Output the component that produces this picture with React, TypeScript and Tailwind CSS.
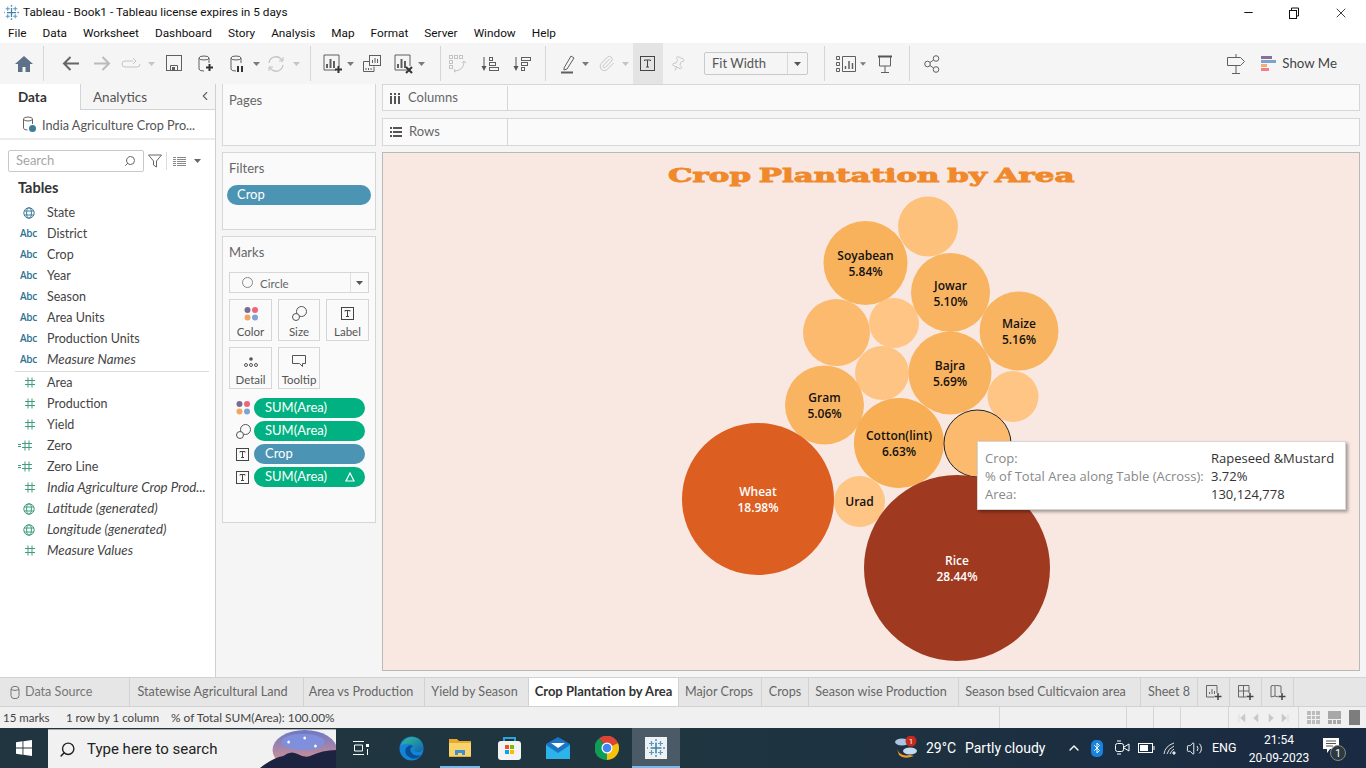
import React from "react";
import { Search, ChevronLeft, ChevronUp, Minus, X, Volume2, Bluetooth, Paperclip, Pin } from "lucide-react";

const G = "#5f5f5f";
const L = "#c4c4c4";

const Caret = ({ c = "#7a7a7a" }: { c?: string }) => (
  <svg width="7" height="4" viewBox="0 0 7 4"><path d="M0 0h7L3.500 4z" fill={c} /></svg>
);

const Sep = () => <div className="w-px h-[35px] bg-[#d6d6d6]" />;

const Slot = ({ w, children, className = "" }: { w: string; children?: React.ReactNode; className?: string }) => (
  <div className={`${w} h-full flex items-center justify-center shrink-0 ${className}`}>{children}</div>
);

const Ico = ({ w = 20, h = 20, children }: { w?: number; h?: number; children: React.ReactNode }) => (
  <svg width={w} height={h} viewBox={`0 0 ${w} ${h}`} fill="none" stroke={G} strokeWidth="1">{children}</svg>
);

const Plus = ({ x, y }: { x: number; y: number }) => (
  <path d={`M${x + 3.5} ${y}v7M${x} ${y + 3.5}h7`} stroke="#333" strokeWidth="2" />
);

const Cyl = ({ c = G }: { c?: string }) => (
  <>
    <ellipse cx="8" cy="4" rx="5" ry="2" stroke={c} />
    <path d="M3 4v11q0 2 5 2M13 4v5" stroke={c} />
  </>
);

const BarsBox = ({ cross, plus }: { cross?: boolean; plus?: boolean }) => (
  <Ico w={22} h={22}>
    <path d="M14 17H2V2h15v11" />
    <path d="M5 15v-4M8.500 15V6M12 15V8" strokeWidth="2" />
    {plus && <Plus x={13} y={13} />}
    {cross && <path d="M13 14l6 6M19 14l-6 6" stroke="#333" strokeWidth="2" />}
  </Ico>
);

const SortIcon = ({ desc }: { desc?: boolean }) => (
  <Ico w={18} h={18}>
    <path d="M3 2v12" stroke="#555" />
    <path d="M0.500 11h5L3 16z" fill="#555" stroke="none" />
    {desc ? (
      <>
        <rect x="8.500" y="2.500" width="9" height="3" />
        <rect x="8.500" y="7.500" width="6" height="3" />
        <rect x="8.500" y="12.500" width="3" height="3" />
      </>
    ) : (
      <>
        <rect x="8.500" y="2.500" width="3" height="3" />
        <rect x="8.500" y="7.500" width="6" height="3" />
        <rect x="8.500" y="12.500" width="9" height="3" />
      </>
    )}
  </Ico>
);

const Arrow = ({ c, flip }: { c: string; flip?: boolean }) => (
  <svg width="17" height="15" viewBox="0 0 17 15" fill="none" stroke={c} strokeWidth="2" className={flip ? "-scale-x-100" : ""}>
    <path d="M2 7.500h15M8.500 1L2 7.500 8.500 14" />
  </svg>
);

const Toolbar = () => (
  <div className="h-[41px] bg-[#f5f5f5] flex items-center shrink-0 pl-[9px]">
    <Slot w="w-[30px]">
      <svg width="18" height="16" viewBox="0 0 18 16"><path d="M9 0L0 8h3v8h4.500v-5h3v5H15V8h3z" fill="#5d7288" /></svg>
    </Slot>
    <Slot w="w-[8px]"><Sep /></Slot>
    <Slot w="w-[29px]" className="ml-[9px]"><Arrow c="#666" /></Slot>
    <Slot w="w-[35px]"><Arrow c="#bbb" flip /></Slot>
    <Slot w="w-[21px]">
      <Ico w={20} h={12}>
        <path d="M12 3H4q-3 0-3 3t3 3h12q3 0 3-3" stroke={L} />
        <path d="M12 0l3 3-3 3" stroke={L} />
      </Ico>
    </Slot>
    <Slot w="w-[14px]" className="ml-[3px]"><Caret c="#c4c4c4" /></Slot>
    <Slot w="w-[30px]" className="ml-[1px]">
      <Ico w={17} h={17}>
        <rect x="0.500" y="0.500" width="15" height="15" />
        <path d="M4.500 15.500v-5h7v5" />
        <rect x="6" y="12" width="3" height="3" fill={G} stroke="none" />
      </Ico>
    </Slot>
    <Slot w="w-[33px]"><Ico w={20} h={20}><Cyl /><Plus x={10} y={10} /></Ico></Slot>
    <Slot w="w-[29px]">
      <Ico w={18} h={20}><Cyl /><path d="M10 12v6M14 12v6" stroke="#333" strokeWidth="2" /></Ico>
    </Slot>
    <Slot w="w-[11px]"><Caret /></Slot>
    <Slot w="w-[28px]">
      <Ico w={18} h={18}>
        <path d="M2 8a7 7 0 0 1 12-4l2 2M16 10a7 7 0 0 1-12 4l-2-2" stroke={L} strokeWidth="1.300" />
        <path d="M16 2v4h-4M2 16v-4h4" stroke={L} />
      </Ico>
    </Slot>
    <Slot w="w-[12px]"><Caret c="#c4c4c4" /></Slot>
    <Slot w="w-[8px]" className="ml-[4px]"><Sep /></Slot>
    <Slot w="w-[27px]" className="ml-[5px]"><BarsBox plus /></Slot>
    <Slot w="w-[8px]"><Caret /></Slot>
    <Slot w="w-[32px]" className="ml-[2px]">
      <Ico w={18} h={18}>
        <rect x="6.500" y="0.500" width="11" height="10" fill="#f5f5f5" />
        <path d="M9.500 8V5M12 8V3M14.500 8V4" />
        <path d="M6 6.500H0.500v10H11v-5" />
        <path d="M3 15v-2M5.500 15v-2M8 15v-2" />
      </Ico>
    </Slot>
    <Slot w="w-[26px]" className="ml-[3px]"><BarsBox cross /></Slot>
    <Slot w="w-[8px]"><Caret /></Slot>
    <Slot w="w-[8px]" className="ml-[11px]"><Sep /></Slot>
    <Slot w="w-[26px]" className="ml-[1px]">
      <Ico w={18} h={18}>
        <g stroke={L}>
          <rect x="0.500" y="0.500" width="3" height="3" /><rect x="5.500" y="0.500" width="3" height="3" /><rect x="10.500" y="0.500" width="3" height="3" />
          <rect x="0.500" y="5.500" width="3" height="3" /><rect x="0.500" y="10.500" width="3" height="3" />
          <path d="M15 7q0 8-9 9M6 14l-1 2 2 1M13 8l2-2 2 2" />
        </g>
      </Ico>
    </Slot>
    <Slot w="w-[33px]" className="ml-[2px]"><SortIcon /></Slot>
    <Slot w="w-[31px]"><SortIcon desc /></Slot>
    <Slot w="w-[8px]" className="ml-[4px]"><Sep /></Slot>
    <Slot w="w-[22px]" className="ml-[9px]">
      <Ico w={16} h={20}>
        <path d="M3 14L10 2l3 2-7 11-3 1z" />
        <path d="M0 18.500h12" strokeWidth="2" />
      </Ico>
    </Slot>
    <Slot w="w-[10px]"><Caret /></Slot>
    <Slot w="w-[30px]" className="ml-[1px]"><Paperclip size={17} stroke={L} strokeWidth={1.4} /></Slot>
    <Slot w="w-[8px]"><Caret c="#c4c4c4" /></Slot>
    <Slot w="w-[30px]" className="ml-[4px] h-[30px] bg-[#e4e4e4]">
      <Ico w={16} h={16}>
        <rect x="0.500" y="0.500" width="14" height="14" stroke="#444" />
        <path d="M4.500 5V4h6v1M7.500 4v7M6 11h3" stroke="#444" />
      </Ico>
    </Slot>
    <Slot w="w-[29px]"><Pin size={16} stroke={L} strokeWidth={1.3} className="rotate-[25deg]" /></Slot>
    <div className="ml-[12px] w-[104px] h-[23px] border border-[#c9c9c9] rounded-[2px] flex items-center text-[13px] text-[#555] shrink-0 bg-[#f5f5f5]">
      <span className="flex-1 pl-[7px]">Fit Width</span>
      <span className="w-[20px] h-full border-l border-[#d8d8d8] flex items-center justify-center"><Caret c="#555" /></span>
    </div>
    <Slot w="w-[8px]" className="ml-[12px]"><Sep /></Slot>
    <Slot w="w-[20px]" className="ml-[8px]">
      <Ico w={20} h={18}>
        <path d="M0.500 1.500h3v3h-3zM0.500 7.500h3v3h-3zM0.500 13.500h3v3h-3zM6.500 1.500h13v15h-13z" />
        <path d="M9.500 14v-3M13 14V6M16.500 14V8" strokeWidth="1.500" />
      </Ico>
    </Slot>
    <Slot w="w-[6px]" className="ml-[4px]"><Caret /></Slot>
    <Slot w="w-[34px]" className="ml-[2px]">
      <Ico w={16} h={20}>
        <path d="M1 2.500h14" strokeWidth="2" stroke="#555" />
        <path d="M2.500 3v9h11V3M8 12v6M4 18.500h8" />
      </Ico>
    </Slot>
    <Slot w="w-[8px]" className="ml-[3px]"><Sep /></Slot>
    <Slot w="w-[30px]" className="ml-[4px]">
      <Ico w={16} h={18}>
        <circle cx="3.500" cy="9" r="2.800" /><circle cx="12" cy="3.500" r="2.800" /><circle cx="12" cy="14.500" r="2.800" />
        <path d="M6 7.500l3.500-2.500M6 10.500l3.500 2.500" />
      </Ico>
    </Slot>
    <div className="flex-1" />
    <Slot w="w-[20px]" className="ml-[2px]">
      <Ico w={20} h={22}>
        <path d="M10 1v3M1.500 4.500h13l4 4-4 4h-13zM10 13v7M6 20.500h8" />
      </Ico>
    </Slot>
    <div className="ml-[15px] w-[15px] flex flex-col gap-[1px] shrink-0">
      <div className="h-[3px] w-[11px] bg-[#8a6f9e]" />
      <div className="h-[3px] w-[15px] bg-[#7ba3cc]" />
      <div className="h-[3px] w-[6px] bg-[#f3ad6f]" />
      <div className="h-[3px] w-[8px] bg-[#f77b8a]" />
    </div>
    <span className="ml-[6px] mr-[29px] text-[13.300px] text-[#444]">Show Me</span>
  </div>
);

const AbcI = () => <span className="text-[10px] text-[#2f7391] font-semibold tracking-[-0.2px]" style={{ fontFamily: "'Open Sans', sans-serif" }}>Abc</span>;

const Globe = ({ c }: { c: string }) => (
  <svg width="12" height="12" viewBox="0 0 12 12" fill="none" stroke={c} strokeWidth="1">
    <circle cx="6" cy="6" r="5.200" /><ellipse cx="6" cy="6" rx="2.400" ry="5.200" /><path d="M1 4h10M1 8h10" />
  </svg>
);

const Hash = ({ eq }: { eq?: boolean }) => (
  <svg width="18" height="11" viewBox="0 0 18 11" fill="none" stroke="#3f9d80" strokeWidth="1" className={eq ? "-ml-[5px]" : ""}>
    {eq && <path d="M1 4.500h3M1 6.500h3" />}
    <path d="M8 0.500v10M12 0.500v10M5 3.500h10M5 7.500h10" />
  </svg>
);

type Field = { n: string; i: React.ReactNode; it?: boolean };

const dims: Field[] = [
  { n: "State", i: <Globe c="#3d7d99" /> },
  { n: "District", i: <AbcI /> },
  { n: "Crop", i: <AbcI /> },
  { n: "Year", i: <AbcI /> },
  { n: "Season", i: <AbcI /> },
  { n: "Area Units", i: <AbcI /> },
  { n: "Production Units", i: <AbcI /> },
  { n: "Measure Names", i: <AbcI />, it: true },
];

const meas: Field[] = [
  { n: "Area", i: <Hash /> },
  { n: "Production", i: <Hash /> },
  { n: "Yield", i: <Hash /> },
  { n: "Zero", i: <Hash eq /> },
  { n: "Zero Line", i: <Hash eq /> },
  { n: "India Agriculture Crop Prod...", i: <Hash />, it: true },
  { n: "Latitude (generated)", i: <Globe c="#3f9d80" />, it: true },
  { n: "Longitude (generated)", i: <Globe c="#3f9d80" />, it: true },
  { n: "Measure Values", i: <Hash />, it: true },
];

const Row = ({ f }: { f: Field }) => (
  <div className="h-[21px] flex items-center">
    <div className="w-[47px] pl-[14px] pr-[4px] flex justify-center">{f.i}</div>
    <span className={`text-[#444] whitespace-nowrap ${f.it ? "italic text-[13.300px]" : "text-[12.500px] pt-[1px]"}`}>{f.n}</span>
  </div>
);

const DataPane = () => (
  <div className="w-[216px] shrink-0 bg-white border-r border-[#cfcfcf] flex flex-col">
    <div className="h-[26px] flex shrink-0">
      <div className="w-[80px] pl-[18px] flex items-center text-[13.500px] font-bold text-[#333] pt-[1px]">Data</div>
      <div className="flex-1 bg-[#f5f5f5] border-l border-b border-[#d4d4d4] flex items-center pl-[12px] pt-[1px] text-[13.500px] text-[#555] relative">
        Analytics
        <ChevronLeft size={14} stroke="#666" className="absolute right-[3px] top-[5px]" />
      </div>
    </div>
    <div className="h-[30px] border-b-2 border-[#ececec] flex items-center pl-[22px] gap-[6px] shrink-0">
      <svg width="14" height="16" viewBox="0 0 14 16" fill="none" stroke="#666">
        <ellipse cx="6" cy="3" rx="4.500" ry="2" /><path d="M1.500 3v9q0 2 4 2M10.500 3v5" />
        <circle cx="10.500" cy="12.500" r="3.500" fill="#3d7d99" stroke="none" />
      </svg>
      <span className="text-[12.700px] text-[#555] pt-[3px]">India Agriculture Crop Pro...</span>
    </div>
    <div className="flex items-center pl-[8px] mt-[10px] shrink-0">
      <div className="w-[136px] h-[22px] border border-[#c9c9c9] rounded-[2px] flex items-center justify-between px-[7px] text-[13px] text-[#a6a6a6]">
        Search
        <Search size={12} stroke="#666" className="-scale-x-100" />
      </div>
      <svg width="14" height="14" viewBox="0 0 14 14" fill="none" stroke="#666" className="ml-[4px]"><path d="M0.500 1h13L8.500 7v6l-3-2V7z" /></svg>
      <div className="w-px h-[18px] bg-[#dcdcdc] ml-[4px]" />
      <svg width="13" height="9" viewBox="0 0 13 9" className="ml-[6px]" fill="none" stroke="#888">
        <path d="M0 0.500h13M0 2.500h13M0 4.500h13M0 6.500h13M0 8.500h13" />
        <path d="M3.500 0v9" stroke="#fff" />
      </svg>
      <span className="ml-[8px]"><Caret c="#666" /></span>
    </div>
    <div className="pl-[18px] mt-[6px] text-[14.500px] font-bold text-[#333] h-[20px] flex items-center shrink-0">Tables</div>
    <div className="mt-[4px] shrink-0">
      {dims.map((f) => <Row key={f.n} f={f} />)}
    </div>
    <div className="ml-[15px] w-[194px] my-[0.500px] h-px bg-[#dcdcdc] shrink-0" />
    <div className="shrink-0">
      {meas.map((f) => <Row key={f.n} f={f} />)}
    </div>
  </div>
);

const Card = ({ title, className, pt = "pt-[7px]", children }: { title: string; className: string; pt?: string; children?: React.ReactNode }) => (
  <div className={`w-[154px] bg-[#fafafa] border border-[#d6d6d6] shrink-0 ${className}`}>
    <div className={`pl-[6px] ${pt} text-[13px] text-[#666] leading-[16px]`}>{title}</div>
    {children}
  </div>
);

const Dots = () => (
  <svg width="14" height="14" viewBox="0 0 14 14">
    <circle cx="3.500" cy="3" r="3" fill="#7b6a92" /><circle cx="11" cy="3" r="3" fill="#f0647a" />
    <circle cx="3.500" cy="10.500" r="3" fill="#f3a562" /><circle cx="11" cy="10.500" r="3" fill="#7ea4cf" />
  </svg>
);

const SizeI = () => (
  <svg width="15" height="15" viewBox="0 0 15 15" fill="none" stroke="#555">
    <circle cx="9.500" cy="5.500" r="5" /><circle cx="4" cy="11" r="3.500" fill="#fafafa" />
  </svg>
);

const LabelI = ({ s = 13 }: { s?: number }) => (
  <svg width={s} height={s} viewBox="0 0 13 13" fill="none" stroke="#444">
    <rect x="0.500" y="0.500" width="12" height="12" /><path d="M4 4.500V3.500h5v1M6.500 3.500v6M5 9.500h3" />
  </svg>
);

const MarkBtn = ({ w, label, children }: { w: string; label: string; children: React.ReactNode }) => (
  <div className={`${w} h-[42px] border border-[#d6d6d6] flex flex-col items-center shrink-0`}>
    <div className="h-[25px] flex items-center justify-center pt-[2px]">{children}</div>
    <span className="text-[11.500px] text-[#555] leading-[14px]">{label}</span>
  </div>
);

const Pill = ({ c, children }: { c: string; children: React.ReactNode }) => (
  <div className={`${c} h-[20px] w-[111px] rounded-full text-[13px] text-white pl-[11px] pr-[10px] flex items-center justify-between`}>{children}</div>
);

const PillRow = ({ icon, c, children }: { icon: React.ReactNode; c: string; children: React.ReactNode }) => (
  <div className="flex items-center pl-[12px]">
    <div className="w-[19px] pl-[1px] flex items-center">{icon}</div>
    <Pill c={c}>{children}</Pill>
  </div>
);

const Cards = () => (
  <div className="w-[154px] shrink-0 ml-[6px] flex flex-col gap-[6px]">
    <Card title="Pages" className="h-[62px] border-t-0" pt="pt-[8px]" />
    <Card title="Filters" className="h-[78px]">
      <div className="mx-[4px] mt-[9px] h-[20px] rounded-full bg-[#4b94b3] text-[13px] text-white pl-[10px] flex items-center">Crop</div>
    </Card>
    <Card title="Marks" className="h-[287px]">
      <div className="mx-[6px] mt-[12px] h-[21px] border border-[#d6d6d6] flex items-center">
        <span className="w-[11px] h-[11px] rounded-full border border-[#888] ml-[12px]" />
        <span className="ml-[7px] text-[11.500px] text-[#666] flex-1 pt-[2px]">Circle</span>
        <span className="w-[18px] h-full border-l border-[#e0e0e0] flex items-center justify-center"><Caret c="#555" /></span>
      </div>
      <div className="mx-[6px] mt-[6px] flex gap-[6px]">
        <MarkBtn w="w-[43px]" label="Color"><Dots /></MarkBtn>
        <MarkBtn w="w-[42px]" label="Size"><SizeI /></MarkBtn>
        <MarkBtn w="w-[43px]" label="Label"><LabelI /></MarkBtn>
      </div>
      <div className="mx-[6px] mt-[6px] flex gap-[6px]">
        <MarkBtn w="w-[43px]" label="Detail">
          <svg width="14" height="10" viewBox="0 0 14 10" fill="none" stroke="#555">
            <circle cx="7" cy="2" r="1.800" fill="#555" stroke="none" /><circle cx="2" cy="8" r="1.500" /><circle cx="7" cy="8" r="1.500" /><circle cx="12" cy="8" r="1.500" />
          </svg>
        </MarkBtn>
        <MarkBtn w="w-[42px]" label="Tooltip">
          <svg width="14" height="13" viewBox="0 0 14 13" fill="none" stroke="#555"><path d="M0.500 0.500h13v8h-3v3l-3-3h-7z" /></svg>
        </MarkBtn>
      </div>
      <div className="mt-[9px] flex flex-col gap-[3px]">
        <PillRow icon={<Dots />} c="bg-[#02b181]">SUM(Area)</PillRow>
        <PillRow icon={<SizeI />} c="bg-[#02b181]">SUM(Area)</PillRow>
        <PillRow icon={<LabelI />} c="bg-[#4b94b3]">Crop</PillRow>
        <PillRow icon={<LabelI />} c="bg-[#02b181]">
          SUM(Area)
          <svg width="10" height="10" viewBox="0 0 10 10" fill="none" stroke="#fff" strokeWidth="1.200"><path d="M5 1l4 8H1z" /></svg>
        </PillRow>
      </div>
    </Card>
  </div>
);

const Shelf = ({ icon, label, className }: { icon: React.ReactNode; label: string; className: string }) => (
  <div className={`bg-[#fafafa] border border-[#d6d6d6] flex shrink-0 ${className}`}>
    <div className="w-[125px] border-r border-[#d6d6d6] flex items-center pl-[7px] gap-[7px] text-[13px] text-[#666]">
      {icon}
      {label}
    </div>
  </div>
);

type Bubble = { x: number; y: number; r: number; c: string; a?: string; b?: string; t?: string };

const bubbles: Bubble[] = [
  { x: 928, y: 226.5, r: 30, c: "#fdc17c" },
  { x: 865.5, y: 263, r: 42, c: "#f9b25c", a: "Soyabean", b: "5.84%" },
  { x: 836.5, y: 332.5, r: 33.5, c: "#fcba6f" },
  { x: 894, y: 323, r: 25, c: "#fec585" },
  { x: 950.5, y: 292.5, r: 39.5, c: "#f9b461", a: "Jowar", b: "5.10%" },
  { x: 1019, y: 331, r: 39.5, c: "#f9b461", a: "Maize", b: "5.16%" },
  { x: 882, y: 373, r: 27, c: "#fec483" },
  { x: 950, y: 373, r: 41.5, c: "#f9b25d", a: "Bajra", b: "5.69%" },
  { x: 1013, y: 396.5, r: 25.5, c: "#fec585" },
  { x: 824.5, y: 405, r: 39.5, c: "#f9b461", a: "Gram", b: "5.06%" },
  { x: 899, y: 443, r: 45, c: "#f8ae54", a: "Cotton(lint)", b: "6.63%" },
  { x: 977.5, y: 443.5, r: 33.5, c: "#fcba6f" },
  { x: 758, y: 499, r: 76, c: "#dc5e20", a: "Wheat", b: "18.98%", t: "#fff" },
  { x: 859.5, y: 501.5, r: 25.5, c: "#fec585", a: "Urad" },
  { x: 957, y: 568, r: 93, c: "#9f3a20", a: "Rice", b: "28.44%", t: "#fff" },
];

// chart drawn in page coordinates, offset by the canvas box
const Chart = () => (
  <svg className="w-full h-full block" viewBox="383 153 976 517">
    {bubbles.map((d) => (
      <g key={d.x}>
        <circle cx={d.x} cy={d.y} r={d.r} fill={d.c} stroke={d.x === 977.5 ? "#222" : "none"} />
        {d.a && (
          <text x={d.x} y={d.b ? d.y - 3 : d.y + 4} textAnchor="middle" fontSize="12" fontWeight="600" fill={d.t || "#111"} style={{ fontFamily: "'Open Sans', sans-serif" }}>{d.a}</text>
        )}
        {d.b && (
          <text x={d.x} y={d.y + 13} textAnchor="middle" fontSize="12" fontWeight="600" fill={d.t || "#111"} style={{ fontFamily: "'Open Sans', sans-serif" }}>{d.b}</text>
        )}
      </g>
    ))}
  </svg>
);

const Canvas = () => (
  <div className="mt-[6px] flex-1 bg-[#f9e8e1] border border-[#b9b9b9] flex flex-col relative min-h-0 overflow-hidden">
    <div className="absolute inset-0"><Chart /></div>
    <div className="relative text-center pt-[10px] h-[34px] text-[#f0892c] text-[21px] leading-[26px] whitespace-nowrap [word-spacing:-2px] [-webkit-text-stroke:1px_#f0892c]" style={{ fontFamily: "'DejaVu Serif', serif", fontWeight: 700 }}>
      <span className="inline-block scale-x-[1.47] scale-y-[0.85]">Crop Plantation by Area</span>
    </div>
    <div className="absolute left-[594px] top-[288px] w-[369px] h-[69px] bg-white border border-[#d6d6d6] shadow-[2px_2px_3px_rgba(0,0,0,0.35)] pl-[7px] pt-[7px] text-[13px] leading-[18px] text-[#333] flex" style={{ fontFamily: "'Open Sans', sans-serif" }}>
      <div className="w-[226px] text-[#888] shrink-0 whitespace-nowrap">
        <div>Crop:</div>
        <div>% of Total Area along Table (Across):</div>
        <div>Area:</div>
      </div>
      <div className="whitespace-nowrap">
        <div>Rapeseed &amp;Mustard</div>
        <div>3.72%</div>
        <div>130,124,778</div>
      </div>
    </div>
  </div>
);

const Tab = ({ w, children, active, pr = "" }: { w: string; children: React.ReactNode; active?: boolean; pr?: string }) => (
  <div className={`${w} ${pr} shrink-0 h-full border-r border-[#d2d2d2] flex items-center justify-center whitespace-nowrap ${active ? "bg-white text-[13px] text-[#333] font-bold" : "text-[12.600px] text-[#666] pt-[1px]"}`}>{children}</div>
);

const TabAdd = ({ kind }: { kind: number }) => (
  <svg width="16" height="16" viewBox="0 0 16 16" fill="none" stroke="#666">
    {kind === 0 && <><path d="M8 12H0.500V0.500H11V8" /><path d="M3.500 9V7M6 9V4M8.500 9V6" /></>}
    {kind === 1 && <path d="M8 12H0.500V0.500H11V8M0.500 6h10.500M5.500 0.500V12" />}
    {kind === 2 && <path d="M8 12l-3-1-4 1V1l4-1 5 1 1 0v7M5 0v11" />}
    <path d="M12 8v7M8.500 11.500h7" stroke="#444" strokeWidth="1.500" />
  </svg>
);

const Tabs = () => (
  <div className="h-[29px] bg-[#e6e6e6] border-t border-[#d2d2d2] flex shrink-0">
    <div className="w-[130px] shrink-0 h-full border-r border-[#d2d2d2] flex items-center pl-[10px] gap-[5px] text-[12.600px] text-[#777] pt-[1px]">
      <svg width="10" height="13" viewBox="0 0 10 13" fill="none" stroke="#777"><rect x="1" y="0.500" width="8" height="12" rx="3" /><path d="M1 3.500q4 2 8 0" /></svg>
      Data Source
    </div>
    <Tab w="w-[174px]" pr="pr-[8px]">Statewise Agricultural Land</Tab>
    <Tab w="w-[121px]" pr="pr-[6px]">Area vs Production</Tab>
    <Tab w="w-[104px]" pr="pr-[4px]">Yield by Season</Tab>
    <Tab w="w-[150px]" active>Crop Plantation by Area</Tab>
    <Tab w="w-[83px]" pr="pr-[2px]">Major Crops</Tab>
    <Tab w="w-[47px]">Crops</Tab>
    <Tab w="w-[150px]" pr="pr-[5px]">Season wise Production</Tab>
    <Tab w="w-[182px]" pr="pr-[8px]">Season bsed Culticvaion area</Tab>
    <Tab w="w-[57px]">Sheet 8</Tab>
    <Tab w="w-[32px]"><TabAdd kind={0} /></Tab>
    <Tab w="w-[32px]"><TabAdd kind={1} /></Tab>
    <Tab w="w-[32px]"><TabAdd kind={2} /></Tab>
  </div>
);

const Status = () => (
  <div className="h-[22px] bg-[#f0f0f0] border-t border-[#d2d2d2] flex items-center shrink-0 text-[11.500px] text-[#444]">
    <span className="w-[63px] pl-[3px]">15 marks</span>
    <span className="w-[105px] pl-[3px]">1 row by 1 column</span>
    <span className="pl-[3px] w-[831px] text-[11.900px]">% of Total SUM(Area): 100.00%</span>
    <div className="h-full w-[127px] border-l border-[#d6d6d6]" />
    <div className="h-full w-[27px] border-l border-[#d6d6d6]" />
    <div className="h-full w-[27px] border-l border-[#d6d6d6]" />
    <div className="h-full w-[48px] border-l border-[#d6d6d6]" />
    <div className="h-full w-[70px] border-l border-[#d6d6d6] flex items-center justify-around px-[6px]">
      {["M2 1v8M8 1L3.500 5 8 9z", "M7 1L2.500 5 7 9z", "M3 1l4.500 4L3 9z", "M2 1l4.500 4L2 9zM8 1v8"].map((d) => (
        <svg key={d} width="10" height="10" viewBox="0 0 10 10" fill="#c8c8c8" stroke="#c8c8c8" strokeWidth="0.500"><path d={d} /></svg>
      ))}
    </div>
    <div className="h-full flex-1 border-l border-[#d6d6d6] flex items-center gap-[8px] pl-[8px]">
      <div className="w-[13px] h-[13px] grid grid-cols-3 gap-[1px]">{Array.from({ length: 9 }).map((_, i) => <div key={i} className="bg-[#bcbcbc]" />)}</div>
      <div className="w-[13px] h-[13px] grid grid-rows-[2fr_1fr] gap-[1px]">
        <div className="bg-[#a8a8a8]" />
        <div className="grid grid-cols-3 gap-[1px]"><div className="bg-[#a8a8a8]" /><div className="bg-[#a8a8a8]" /><div className="bg-[#a8a8a8]" /></div>
      </div>
      <div className="w-[11px] h-[15px] bg-[#7d7d7d]" />
    </div>
  </div>
);

const TableauLogo = ({ s, c = "#5e97bb" }: { s: number; c?: string }) => (
  <svg width={s} height={s} viewBox="0 0 18 18" fill="none" stroke={c} strokeWidth="1.200">
    <path d="M9 3.500v11M3.500 9h11" stroke="#3f7fa8" strokeWidth="1.500" />
    <path d="M4.500 2v5M2 4.500h5M13.500 2v5M11 4.500h5M4.500 11v5M2 13.500h5M13.500 11v5M11 13.500h5M9 0v2M8 1h2M9 16v2M8 17h2M0 8v2M-1 9h2M17 8v2M16 9h3" />
  </svg>
);

const Taskbar = () => (
  <div className="h-[40px] bg-linear-to-r from-[#20353f] via-[#1f3540] to-[#1a2a42] flex items-center shrink-0 text-white" style={{ fontFamily: "Roboto, sans-serif" }}>
    <div className="w-[48px] flex justify-center shrink-0">
      <svg width="16" height="16" viewBox="0 0 16 16" fill="#fff"><path d="M0 2.200l6.500-.9v6.300H0zM7.400 1.200L16 0v7.600H7.400zM0 8.500h6.500v6.200L0 13.800zM7.400 8.500H16V16l-8.600-1.200z" /></svg>
    </div>
    <div className="w-[288px] h-[39px] mt-[1px] bg-[#f1f1f1] border-t border-[#aaa] flex items-center pl-[11px] relative overflow-hidden shrink-0">
      <Search size={17} stroke="#222" className="-scale-x-100" />
      <span className="ml-[11px] text-[15px] text-[#222]">Type here to search</span>
      <svg width="76" height="38" viewBox="0 0 85 38" preserveAspectRatio="none" className="absolute right-0 top-0">
        <defs>
          <linearGradient id="sk" x1="0" y1="0" x2="0" y2="1"><stop offset="0" stopColor="#6a78c8" /><stop offset="0.6" stopColor="#b98aa0" /><stop offset="1" stopColor="#e58e5c" /></linearGradient>
        </defs>
        <ellipse cx="50" cy="20" rx="36" ry="20" fill="url(#sk)" />
        <ellipse cx="48" cy="12" rx="24" ry="8" fill="#7f8fdc" />
        <path d="M0 38q14-10 26-12 8-6 16-2 8 4 14 2 14-6 29-6v18z" fill="#1c2340" />
        <circle cx="32" cy="12" r="1.500" fill="#fff" /><circle cx="50" cy="8" r="1.500" fill="#fff" /><circle cx="62" cy="16" r="1.500" fill="#fff" />
      </svg>
    </div>
    <div className="ml-[15px] w-[20px] flex justify-center shrink-0">
      <svg width="16" height="16" viewBox="0 0 16 16" fill="none" stroke="#fff"><path d="M0 1.500h11M0 14.500h11M1.500 5h8v6h-8z" /><rect x="13" y="4" width="3" height="3" fill="#fff" stroke="none" /><path d="M14.500 9v6" /></svg>
    </div>
    <div className="ml-[23px] w-[34px] h-full flex items-center justify-center shrink-0">
      <svg width="25" height="25" viewBox="0 0 25 25">
        <defs><linearGradient id="ed" x1="0" y1="0" x2="1" y2="1"><stop offset="0" stopColor="#37c28f" /><stop offset="1" stopColor="#0c64b8" /></linearGradient></defs>
        <circle cx="12.500" cy="12.500" r="12" fill="#1384d6" />
        <path d="M2 9Q6 1 14 1q10 1 10 11 0 4-5 4-4 0-4-3 0-5-5-5-5 0-8 1z" fill="url(#ed)" />
        <path d="M12 22q-8-3-5-10 3-4 7-2-4 2-2 6 3 5 10 3-4 5-10 3z" fill="#0a4f96" />
      </svg>
    </div>
    <div className="ml-[12px] w-[40px] h-full relative flex items-center justify-center shrink-0">
      <svg width="22" height="18" viewBox="0 0 22 18">
        <path d="M0 0h8l2 2h12v16H0z" fill="#e8a92c" /><rect y="4" width="22" height="13" fill="#f9d36b" />
        <path d="M6 16v-5h10v5h-3v-2H9v2z" fill="#3c8fd0" />
      </svg>
      <div className="absolute bottom-0 left-0 right-0 h-[2px] bg-[#76b9ed]" />
    </div>
    <div className="ml-[9px] w-[40px] h-full flex items-center justify-center shrink-0">
      <svg width="23" height="24" viewBox="0 0 23 24">
        <path d="M6 6V2h11v4" fill="none" stroke="#27a6dc" strokeWidth="2" />
        <rect y="5" width="23" height="19" rx="3" fill="#f3f3f3" />
        <rect x="7" y="9" width="4" height="4" fill="#f25022" /><rect x="12" y="9" width="4" height="4" fill="#7fba00" />
        <rect x="7" y="14" width="4" height="4" fill="#00a4ef" /><rect x="12" y="14" width="4" height="4" fill="#ffb900" />
      </svg>
    </div>
    <div className="ml-[9px] w-[40px] h-full flex items-center justify-center shrink-0">
      <svg width="24" height="22" viewBox="0 0 24 22">
        <path d="M0 7L12 0l12 7v15H0z" fill="#1b74c4" /><path d="M0 8l12 8 12-8v14H0z" fill="#2cb3ea" /><path d="M5 6h14l-7 5z" fill="#fff" />
      </svg>
    </div>
    <div className="ml-[9px] w-[40px] h-full flex items-center justify-center shrink-0">
      <svg width="24" height="24" viewBox="0 0 24 24">
        <path d="M12 12L4 2.500A12 12 0 0 1 23 7z" fill="#db4437" />
        <path d="M12 12L23 7A12 12 0 0 1 12 24z" fill="#f4c20d" />
        <path d="M12 12l0 12A12 12 0 0 1 4 2.500z" fill="#0f9d58" />
        <circle cx="12" cy="12" r="5.500" fill="#fff" /><circle cx="12" cy="12" r="4.300" fill="#4285f4" />
      </svg>
    </div>
    <div className="ml-[5px] w-[48px] h-full bg-[#4a5a66] relative flex items-center justify-center shrink-0">
      <div className="w-[22px] h-[22px] bg-[#eef1f3] flex items-center justify-center"><TableauLogo s={18} /></div>
      <div className="absolute bottom-0 left-0 right-0 h-[2px] bg-[#76b9ed]" />
    </div>
    <div className="flex-1" />
    <svg width="26" height="24" viewBox="0 0 26 24" className="shrink-0">
      <ellipse cx="8" cy="6" rx="7" ry="3.500" fill="#a9c4e4" />
      <path d="M3 13q3 8 13 6l4 1q-10 4-15-1z" fill="#f39c2b" />
      <ellipse cx="16" cy="15" rx="7" ry="3.500" fill="#c4daf0" />
      <circle cx="17" cy="5" r="5.500" fill="#c42b1c" />
      <text x="17" y="8" textAnchor="middle" fontSize="8" fill="#fff">1</text>
    </svg>
    <span className="ml-[6px] text-[14px] w-[30px] whitespace-nowrap">29°C</span>
    <span className="ml-[9px] text-[14px] w-[78px] whitespace-nowrap">Partly cloudy</span>
    <ChevronUp size={16} className="ml-[23px]" stroke="#fff" />
    <div className="ml-[9px] w-[12px] h-[17px] rounded-[5px] bg-[#1683e0] flex items-center justify-center">
      <Bluetooth size={12} stroke="#fff" />
    </div>
    <svg width="16" height="16" viewBox="0 0 16 16" fill="none" stroke="#fff" className="ml-[11px]"><rect x="1.500" y="3.500" width="8" height="8" rx="2" /><path d="M10 7l5-3v7l-5-3M3 1h4M3 14h4" /></svg>
    <svg width="17" height="10" viewBox="0 0 17 10" className="ml-[8px]" fill="none" stroke="#fff"><rect x="0.500" y="0.500" width="14" height="9" /><rect x="2" y="2" width="8" height="6" fill="#fff" stroke="none" /><path d="M16 3v4" /></svg>
    <svg width="16" height="14" viewBox="0 0 16 14" fill="none" stroke="#ddd" className="ml-[8px]"><path d="M1 13Q2 5 11 2M4 13q1-5 7-8M7 13q1-3 4-5" /><circle cx="11" cy="12" r="1.200" fill="#fff" /></svg>
    <Volume2 size={17} stroke="#fff" strokeWidth={1.3} className="ml-[7px]" />
    <span className="ml-[9px] text-[12.500px] w-[25px]">ENG</span>
    <div className="ml-[7px] w-[70px] text-center text-[12px] leading-[18px] pt-[1px]">
      <div>21:54</div>
      <div>20-09-2023</div>
    </div>
    <div className="ml-[7px] mr-[21px] w-[24px] h-[24px] relative">
      <svg width="16" height="15" viewBox="0 0 16 15" className="absolute left-[2px] top-[2px]"><path d="M0 0h16v11H7l-3 4v-4H0z" fill="#fff" /><path d="M3 3h10M3 5.500h10M3 8h7" stroke="#555" /></svg>
      <div className="absolute left-[9px] top-[9px] w-[16px] h-[16px] rounded-full bg-[#2c3a40] border border-[#888] text-[10px] flex items-center justify-center">1</div>
    </div>
  </div>
);

const menus = ["File", "Data", "Worksheet", "Dashboard", "Story", "Analysis", "Map", "Format", "Server", "Window", "Help"];

export default function App() {
  return (
    <div className="w-[1366px] h-[768px] overflow-hidden flex flex-col bg-white" style={{ fontFamily: "Lato, 'Open Sans', sans-serif" }}>
      <div className="h-[25px] flex items-center shrink-0 pl-[4px]" style={{ fontFamily: "Roboto, sans-serif" }}>
        <TableauLogo s={15} />
        <span className="ml-[4px] text-[11.800px] text-[#111]">Tableau - Book1 - Tableau license expires in 5 days</span>
        <div className="flex-1" />
        <Minus size={13} stroke="#111" />
        <svg width="12" height="12" viewBox="0 0 12 12" fill="none" stroke="#111" className="ml-[33px]"><rect x="1.500" y="3.500" width="7" height="8" /><path d="M3.500 3V1h7v8H9" /></svg>
        <X size={16} stroke="#111" strokeWidth={1.2} className="ml-[33px] mr-[17px]" />
      </div>
      <div className="h-[18px] flex items-center shrink-0 text-[11.800px] text-[#111] whitespace-nowrap pl-[8px] gap-[16px]" style={{ fontFamily: "Roboto, sans-serif" }}>
        {menus.map((m) => <span key={m}>{m}</span>)}
      </div>
      <Toolbar />
      <div className="flex-1 flex min-h-0 bg-[#f5f5f5]">
        <DataPane />
        <Cards />
        <div className="flex-1 ml-[6px] mr-[6px] flex flex-col min-w-0 pb-[6px]">
          <Shelf label="Columns" className="h-[27px] pt-[1px]" icon={
            <svg width="11" height="11" viewBox="0 0 11 11" fill="#555"><rect x="0" y="3" width="2" height="8" /><rect x="4" y="3" width="2" height="8" /><rect x="8" y="3" width="2" height="8" /><rect x="0" y="0" width="2" height="2" /><rect x="4" y="0" width="2" height="2" /><rect x="8" y="0" width="2" height="2" /></svg>
          } />
          <Shelf label="Rows" className="h-[28px] mt-[7px]" icon={
            <svg width="12" height="10" viewBox="0 0 12 10" fill="#555"><rect x="3" y="0" width="9" height="2" /><rect x="3" y="4" width="9" height="2" /><rect x="3" y="8" width="9" height="2" /><rect x="0" y="0" width="2" height="2" /><rect x="0" y="4" width="2" height="2" /><rect x="0" y="8" width="2" height="2" /></svg>
          } />
          <Canvas />
        </div>
      </div>
      <Tabs />
      <Status />
      <Taskbar />
    </div>
  );
}
